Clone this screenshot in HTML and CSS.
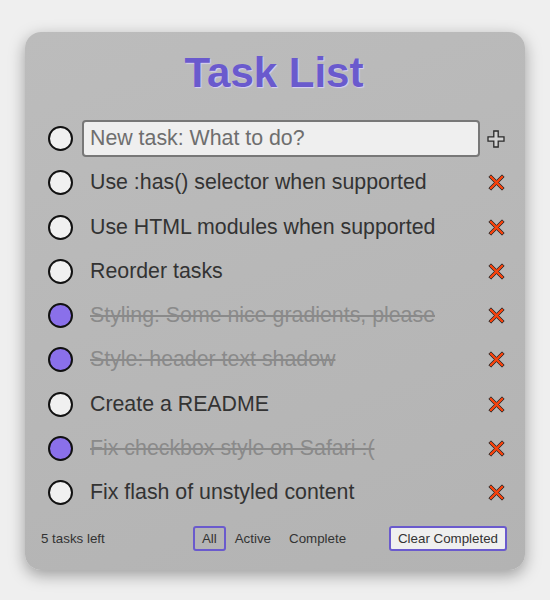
FILE: index.html
```html
<!DOCTYPE html>
<html>
<head>
<meta charset="utf-8">
<link rel="stylesheet" href="styles.css">
</head>
<body>
<main class="card">
  <h1 class="title">Task List</h1>
  <ul class="tasks">
    <li class="row">
      <span class="check"></span>
      <input class="field new" type="text" placeholder="New task: What to do?">
      <button class="icon" aria-label="Add">
        <svg viewBox="0 0 18 18" width="18" height="18"><polygon points="6.8,1 11.2,1 11.2,6.8 17,6.8 17,11.2 11.2,11.2 11.2,17 6.8,17 6.8,11.2 1,11.2 1,6.8 6.8,6.8" fill="#d2d2d2" stroke="#2a2a2a" stroke-width="1.3" stroke-linejoin="miter"/></svg>
      </button>
    </li>
    <li class="row"><span class="check"></span><span class="field">Use :has() selector when supported</span><button class="icon del"><svg viewBox="0 0 16 16" width="17" height="17"><polygon points="0.8,2.8 2.8,0.8 8,6 13.2,0.8 15.2,2.8 10,8 15.2,13.2 13.2,15.2 8,10 2.8,15.2 0.8,13.2 6,8" fill="#f4420d" stroke="#2a2a2a" stroke-width="0.9"/></svg></button></li>
    <li class="row"><span class="check"></span><span class="field">Use HTML modules when supported</span><button class="icon del"><svg viewBox="0 0 16 16" width="17" height="17"><polygon points="0.8,2.8 2.8,0.8 8,6 13.2,0.8 15.2,2.8 10,8 15.2,13.2 13.2,15.2 8,10 2.8,15.2 0.8,13.2 6,8" fill="#f4420d" stroke="#2a2a2a" stroke-width="0.9"/></svg></button></li>
    <li class="row"><span class="check"></span><span class="field">Reorder tasks</span><button class="icon del"><svg viewBox="0 0 16 16" width="17" height="17"><polygon points="0.8,2.8 2.8,0.8 8,6 13.2,0.8 15.2,2.8 10,8 15.2,13.2 13.2,15.2 8,10 2.8,15.2 0.8,13.2 6,8" fill="#f4420d" stroke="#2a2a2a" stroke-width="0.9"/></svg></button></li>
    <li class="row done"><span class="check"></span><span class="field">Styling: Some nice gradients, please</span><button class="icon del"><svg viewBox="0 0 16 16" width="17" height="17"><polygon points="0.8,2.8 2.8,0.8 8,6 13.2,0.8 15.2,2.8 10,8 15.2,13.2 13.2,15.2 8,10 2.8,15.2 0.8,13.2 6,8" fill="#f4420d" stroke="#2a2a2a" stroke-width="0.9"/></svg></button></li>
    <li class="row done"><span class="check"></span><span class="field">Style: header text shadow</span><button class="icon del"><svg viewBox="0 0 16 16" width="17" height="17"><polygon points="0.8,2.8 2.8,0.8 8,6 13.2,0.8 15.2,2.8 10,8 15.2,13.2 13.2,15.2 8,10 2.8,15.2 0.8,13.2 6,8" fill="#f4420d" stroke="#2a2a2a" stroke-width="0.9"/></svg></button></li>
    <li class="row"><span class="check"></span><span class="field">Create a README</span><button class="icon del"><svg viewBox="0 0 16 16" width="17" height="17"><polygon points="0.8,2.8 2.8,0.8 8,6 13.2,0.8 15.2,2.8 10,8 15.2,13.2 13.2,15.2 8,10 2.8,15.2 0.8,13.2 6,8" fill="#f4420d" stroke="#2a2a2a" stroke-width="0.9"/></svg></button></li>
    <li class="row done"><span class="check"></span><span class="field">Fix checkbox style on Safari :(</span><button class="icon del"><svg viewBox="0 0 16 16" width="17" height="17"><polygon points="0.8,2.8 2.8,0.8 8,6 13.2,0.8 15.2,2.8 10,8 15.2,13.2 13.2,15.2 8,10 2.8,15.2 0.8,13.2 6,8" fill="#f4420d" stroke="#2a2a2a" stroke-width="0.9"/></svg></button></li>
    <li class="row"><span class="check"></span><span class="field">Fix flash of unstyled content</span><button class="icon del"><svg viewBox="0 0 16 16" width="17" height="17"><polygon points="0.8,2.8 2.8,0.8 8,6 13.2,0.8 15.2,2.8 10,8 15.2,13.2 13.2,15.2 8,10 2.8,15.2 0.8,13.2 6,8" fill="#f4420d" stroke="#2a2a2a" stroke-width="0.9"/></svg></button></li>
  </ul>
  <footer class="footer">
    <span class="count">5 tasks left</span>
    <div class="filters">
      <button class="btn active">All</button>
      <button class="btn">Active</button>
      <button class="btn">Complete</button>
    </div>
    <div class="right"><button class="btn clear">Clear Completed</button></div>
  </footer>
</main>
</body>
</html>
```
FILE: styles.css
```css
html, body {
  margin: 0;
  padding: 0;
  background: #efefef;
}
body {
  box-sizing: border-box;
  min-height: 600px;
  padding-top: 32px;
  font-family: "Liberation Sans", Arial, sans-serif;
}
.card {
  box-sizing: border-box;
  width: 500px;
  margin: 0 0 0 25px;
  padding: 17px 18px 19px 16px;
  border-radius: 16px;
  background: linear-gradient(160deg, #bcbcbc, #b3b3b3);
  box-shadow: 0 5px 16px rgba(0, 0, 0, 0.35);
}
.title {
  margin: 0 0 23px;
  font-size: 42px;
  line-height: 48px;
  font-weight: bold;
  text-align: center;
  color: #6a5acd;
  text-shadow: 1px 1px 1px #d8d0f4;
}
.tasks {
  list-style: none;
  margin: 0;
  padding: 0;
  display: flex;
  flex-direction: column;
  gap: 7.25px;
}
.row {
  display: flex;
  align-items: center;
  height: 37px;
  padding: 0 2px 0 7px;
}
.check {
  box-sizing: border-box;
  flex: none;
  width: 25px;
  height: 25px;
  border: 2px solid #111;
  border-radius: 50%;
  background: #f0f0f0;
  margin-right: 9px;
}
.done .check {
  background: #8a70ea;
}
.field {
  box-sizing: border-box;
  flex: 1;
  height: 37px;
  padding: 0 6px;
  border: 2px solid transparent;
  border-radius: 4px;
  font-family: "Liberation Sans", Arial, sans-serif;
  font-size: 21.333px;
  line-height: 33px;
  color: #333;
  white-space: nowrap;
  overflow: hidden;
}
.new {
  background: #efefef;
  border-color: #787878;
  outline: none;
}
.new::placeholder {
  color: #6e6e6e;
}
.done .field {
  color: #8a8a8a;
  text-decoration: line-through;
}
.icon {
  flex: none;
  width: 18px;
  height: 18px;
  margin-left: 7px;
  padding: 0;
  border: 0;
  background: none;
  display: flex;
  align-items: center;
  justify-content: center;
}
.icon svg {
  display: block;
}
.footer {
  display: grid;
  grid-template-columns: 1fr auto 1fr;
  align-items: center;
  margin-top: 15px;
  font-size: 13.333px;
  color: #333;
}
.filters {
  display: flex;
}
.right {
  display: flex;
  justify-content: flex-end;
}
.btn {
  font-family: "Liberation Sans", Arial, sans-serif;
  font-size: 13.333px;
  color: #333;
  background: transparent;
  border: 2px solid transparent;
  border-radius: 3px;
  padding: 3px 7px;
  line-height: 15px;
}
.btn.active {
  border-color: #6a5acd;
}
.btn.clear {
  border-color: #6a5acd;
  background: #efefef;
  padding: 3px 7px;
}
```
